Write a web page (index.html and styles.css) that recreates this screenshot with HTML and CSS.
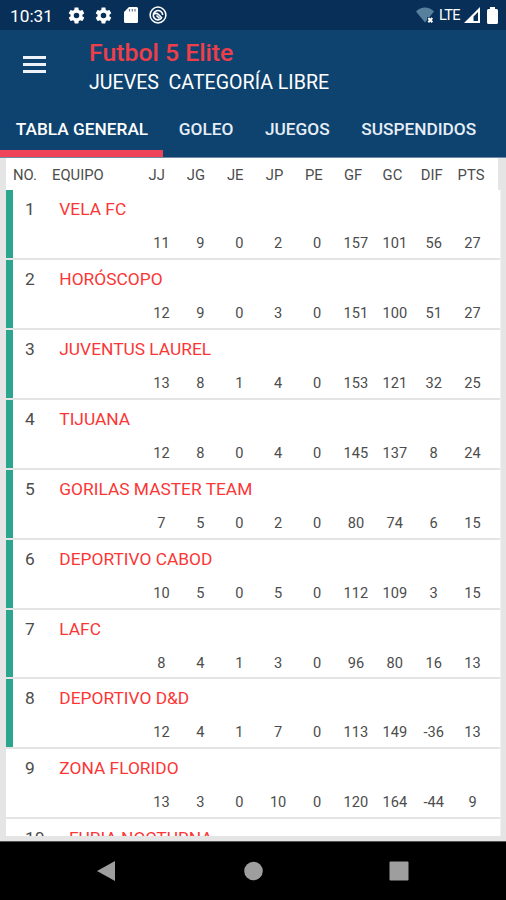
FILE: index.html
```html
<!DOCTYPE html>
<html lang="es">
<head>
  <meta charset="UTF-8">
  <meta name="viewport" content="width=device-width, initial-scale=1.0">
  <title>Futbol 5 Elite</title>
  <link rel="stylesheet" href="styles.css">
</head>
<body>

<div class="status-bar">
  <span class="clock">10:31</span>
  <svg class="gear" viewBox="0 0 24 24" width="19" height="19"><path fill="#fff" d="M19.43 12.98c.04-.32.07-.64.07-.98s-.03-.66-.07-.98l2.11-1.65c.19-.15.24-.42.12-.64l-2-3.46c-.12-.22-.39-.3-.61-.22l-2.49 1c-.52-.4-1.08-.73-1.69-.98l-.38-2.65C14.46 2.18 14.25 2 14 2h-4c-.25 0-.46.18-.49.42l-.38 2.65c-.61.25-1.17.59-1.69.98l-2.49-1c-.23-.09-.49 0-.61.22l-2 3.46c-.13.22-.07.49.12.64l2.11 1.65c-.04.32-.07.65-.07.98s.03.66.07.98l-2.11 1.65c-.19.15-.24.42-.12.64l2 3.46c.12.22.39.3.61.22l2.49-1c.52.4 1.08.73 1.69.98l.38 2.65c.03.24.24.42.49.42h4c.25 0 .46-.18.49-.42l.38-2.65c.61-.25 1.17-.59 1.69-.98l2.49 1c.23.09.49 0 .61-.22l2-3.46c.12-.22.07-.49-.12-.64l-2.11-1.65zM12 15.5a3.5 3.5 0 1 1 0-7 3.5 3.5 0 0 1 0 7z"/></svg>
  <svg class="gear" viewBox="0 0 24 24" width="19" height="19"><path fill="#fff" d="M19.43 12.98c.04-.32.07-.64.07-.98s-.03-.66-.07-.98l2.11-1.65c.19-.15.24-.42.12-.64l-2-3.46c-.12-.22-.39-.3-.61-.22l-2.49 1c-.52-.4-1.08-.73-1.69-.98l-.38-2.65C14.46 2.18 14.25 2 14 2h-4c-.25 0-.46.18-.49.42l-.38 2.65c-.61.25-1.17.59-1.69.98l-2.49-1c-.23-.09-.49 0-.61.22l-2 3.46c-.13.22-.07.49.12.64l2.11 1.65c-.04.32-.07.65-.07.98s.03.66.07.98l-2.11 1.65c-.19.15-.24.42-.12.64l2 3.46c.12.22.39.3.61.22l2.49-1c.52.4 1.08.73 1.69.98l.38 2.65c.03.24.24.42.49.42h4c.25 0 .46-.18.49-.42l.38-2.65c.61-.25 1.17-.59 1.69-.98l2.49 1c.23.09.49 0 .61-.22l2-3.46c.12-.22.07-.49-.12-.64l-2.11-1.65zM12 15.5a3.5 3.5 0 1 1 0-7 3.5 3.5 0 0 1 0 7z"/></svg>
  <svg class="sd-card" viewBox="0 0 14 16" width="14" height="16"><path fill="#fff" d="M5 0h7.500a1.500 1.500 0 0 1 1.500 1.500v13a1.500 1.500 0 0 1-1.500 1.500h-11A1.500 1.500 0 0 1 0 14.500V5z"/><path stroke="#5f7894" stroke-width="1.200" d="M5.500 2v2.500M8.300 2v2.500M11 2v2.500"/></svg>
  <svg class="sync" viewBox="0 0 18 18" width="18" height="18"><g fill="none" stroke="#fff"><circle cx="9" cy="9" r="7.900" stroke-width="1.500"/><path stroke-width="1.600" d="M12.500 12.300A4.700 4.700 0 1 1 13.700 9M5 8c2.500-1.500 3.500-.5 4.500.5s2 1.800 3.500 3.800M7.500 9.500l3 2.800"/></g></svg>
  <svg class="wifi" viewBox="0 0 19 16" width="19" height="16"><path fill="#57809f" d="M9 15.500 0 4.500C5-.8 13-.8 18 4.500L13.500 10H11v3z"/><path stroke="#fff" stroke-width="2" d="m12.300 11 4 4.300M16.300 11l-4 4.300"/></svg>
  <span class="lte">LTE</span>
  <svg class="signal" viewBox="0 0 16 16" width="16" height="16"><path fill="#fff" fill-rule="evenodd" d="M16 0v16H0zM14 5v9H9.500V9.500z"/></svg>
  <svg class="battery" viewBox="0 0 11 17" width="11" height="17"><path fill="#fff" d="M3 0h5v2h1.500A1.500 1.500 0 0 1 11 3.500v12a1.500 1.500 0 0 1-1.500 1.500h-8A1.500 1.500 0 0 1 0 15.500v-12A1.500 1.500 0 0 1 1.500 2H3z"/></svg>
</div>

<header class="app-bar">
  <div class="toolbar">
    <div class="menu-button"><span></span><span></span><span></span></div>
    <div class="titles">
      <h1>Futbol 5 Elite</h1>
      <p>JUEVES&nbsp; CATEGORÍA LIBRE</p>
    </div>
  </div>
  <nav class="tabs">
    <a class="tab active">TABLA GENERAL</a>
    <a class="tab">GOLEO</a>
    <a class="tab">JUEGOS</a>
    <a class="tab">SUSPENDIDOS</a>
  </nav>
</header>

<main class="content">
  <div class="table-head">
    <span class="head-no">NO.</span>
    <span class="head-team">EQUIPO</span>
    <span>JJ</span>
    <span>JG</span>
    <span>JE</span>
    <span>JP</span>
    <span>PE</span>
    <span>GF</span>
    <span>GC</span>
    <span>DIF</span>
    <span>PTS</span>
  </div>
  <div class="team-list" id="teamList"></div>
</main>

<div class="nav-bar">
  <svg viewBox="0 0 20 22" width="20" height="22"><path fill="#9e9e9e" d="M19 1v20L1 11z"/></svg>
  <svg viewBox="0 0 20 20" width="20" height="20"><circle cx="10.500" cy="10" r="9.300" fill="#9e9e9e"/></svg>
  <svg viewBox="0 0 20 20" width="20" height="20"><rect x=".5" y=".5" width="19" height="19" rx="1" fill="#9e9e9e"/></svg>
</div>

<script>
  const teamList = document.getElementById('teamList');
  const qualified = 8;

  // JJ, JG, JE, JP, PE, GF, GC, DIF, PTS
  const teams = [
    ['VELA FC', [11, 9, 0, 2, 0, 157, 101, 56, 27]],
    ['HORÓSCOPO', [12, 9, 0, 3, 0, 151, 100, 51, 27]],
    ['JUVENTUS LAUREL', [13, 8, 1, 4, 0, 153, 121, 32, 25]],
    ['TIJUANA', [12, 8, 0, 4, 0, 145, 137, 8, 24]],
    ['GORILAS MASTER TEAM', [7, 5, 0, 2, 0, 80, 74, 6, 15]],
    ['DEPORTIVO CABOD', [10, 5, 0, 5, 0, 112, 109, 3, 15]],
    ['LAFC', [8, 4, 1, 3, 0, 96, 80, 16, 13]],
    ['DEPORTIVO D&D', [12, 4, 1, 7, 0, 113, 149, -36, 13]],
    ['ZONA FLORIDO', [13, 3, 0, 10, 0, 120, 164, -44, 9]],
    ['FURIA NOCTURNA', []]
  ];

  function addElement(parent, className, text) {
    const element = document.createElement('div');
    element.className = className;
    element.textContent = text;
    parent.appendChild(element);
    return element;
  }

  teams.forEach(([name, values], index) => {
    const row = addElement(teamList, 'team', '');
    if (index < qualified) {
      row.classList.add('qualified');
    }

    const title = addElement(row, 'team-title', '');
    addElement(title, 'position', index + 1);
    addElement(title, 'name', name);

    const stats = addElement(row, 'stats', '');
    values.forEach(value => addElement(stats, 'stat', value));
  });
</script>

</body>
</html>
```
FILE: styles.css
```css
* {
  box-sizing: border-box;
  margin: 0;
  padding: 0;
}

body {
  display: flex;
  flex-direction: column;
  width: 506px;
  height: 900px;
  overflow: hidden;
  background-color: #e5e5e5;
  font-family: Roboto, 'Liberation Sans', sans-serif;
}

svg {
  display: block;
  flex: none;
}

/* Status bar */
.status-bar {
  display: flex;
  align-items: center;
  flex: none;
  height: 30px;
  padding-left: 10px;
  background-color: #082f57;
  color: #fff;
}

.clock {
  width: 57px;
  padding-top: 2px;
  font-size: 17.3px;
}

.gear {
  margin-right: 8px;
}

.sd-card {
  margin-left: 3px;
}

.sync {
  margin-left: 11px;
}

.wifi {
  margin-left: 249px;
}

.lte {
  width: 25px;
  margin-left: 4px;
  font-size: 14.5px;
  letter-spacing: -0.6px;
}

.battery {
  margin-left: 7px;
}

/* App bar */
.app-bar {
  flex: none;
  height: 128px;
  background-color: #0e436f;
  border-bottom: 1px solid #6f89a3;
  color: #fff;
}

.toolbar {
  display: flex;
  height: 71px;
}

.menu-button {
  display: flex;
  flex-direction: column;
  gap: 4px;
  width: 66px;
  padding: 26px 20px 0 23px;
}

.menu-button span {
  height: 3px;
  background-color: #eef3fa;
}

.titles {
  padding: 8px 0 0 23px;
}

h1 {
  font-size: 24.8px;
  font-weight: 500;
  line-height: 30px;
  color: #ee3e4a;
}

.titles p {
  font-size: 19.6px;
  line-height: 30px;
}

.tabs {
  display: flex;
  height: 56px;
}

.tab {
  height: 56px;
  padding: 0 15.8px;
  font-size: 17.25px;
  font-weight: 500;
  line-height: 57px;
  white-space: nowrap;
  color: #e6eef8;
}

.tab.active {
  width: 163px;
  border-bottom: 7px solid #ee4359;
  color: #fff;
}

/* Standings */
.content {
  flex: none;
  height: 678px;
  padding: 0 5px 0 6px;
  overflow: hidden;
}

.table-head {
  display: grid;
  grid-template-columns: 39px 92px repeat(9, 39.3px);
  width: 492px;
  height: 32px;
  background-color: #fff;
  font-size: 14.8px;
  line-height: 34px;
  text-align: center;
  color: #4c4c4c;
}

.table-head .head-no,
.table-head .head-team {
  padding-left: 7px;
  text-align: left;
}

.team-list {
  border-right: 1px solid #f1f1f1;
}

.team {
  height: 69.85px;
  background-color: #fff;
  border-bottom: 2px solid #e4e4e4;
}

.team.qualified {
  background: linear-gradient(to right, #2ba58b 7px, #fff 7px);
}

.team:first-child {
  height: 70.4px;
}

.team-title {
  display: flex;
  height: 36px;
  padding-left: 19px;
  font-size: 17.35px;
  line-height: 38px;
}

.position {
  min-width: 34.3px;
  padding-right: 24.5px;
  color: #4c4c4c;
}

.name {
  color: #fa3636;
}

.stats {
  display: grid;
  grid-template-columns: repeat(9, 38.9px);
  padding-left: 136px;
  font-size: 14.6px;
  line-height: 35px;
  text-align: center;
  color: #4c4c4c;
}

/* System navigation */
.nav-bar {
  display: flex;
  align-items: center;
  justify-content: space-between;
  height: 59px;
  margin-top: 5px;
  padding: 0 97px 0 96px;
  background-color: #000;
  border-top: 1px solid #555;
}
```
